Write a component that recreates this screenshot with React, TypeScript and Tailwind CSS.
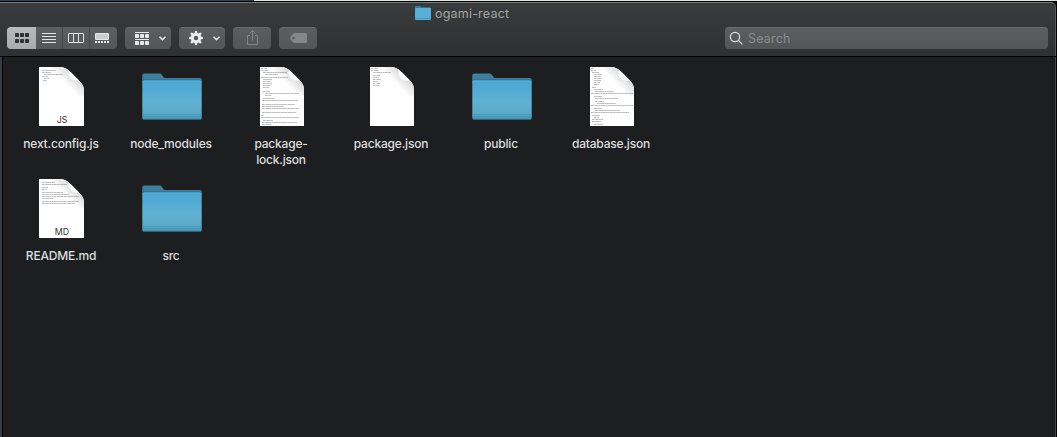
import React from "react";

type Line = [x: number, y: number, width: number];

type Entry = {
  name: string[];
  kind: "folder" | "file";
  badge?: string;
  narrow?: boolean;
  lines?: Line[];
};

const configLines: Line[] = [
  [3, 3.5, 14], [3, 5.5, 9], [5, 7.5, 19], [3, 9.5, 6], [5, 11.5, 5], [4, 13.5, 4],
];

const readmeLines: Line[] = [
  [3, 3.5, 13], [3, 5.5, 25], [3, 8.5, 6], [3, 10.5, 5], [3, 13.5, 21], [3, 15.5, 27],
  [3, 17.5, 37], [3, 19.5, 12], [3, 22.5, 37], [3, 24.5, 33],
];

const packageLines: Line[] = [
  [1, 1.5, 7], [1, 3.5, 8], [3, 5.5, 18], [3, 8.5, 7], [3, 10.5, 6],
  [3, 12.5, 8], [3, 14.5, 5], [3, 16.5, 7], [3, 18.5, 6],
];

const lockLines: Line[] = [
  [1, 1.5, 6], [1, 3.5, 7], [3, 5.5, 24], [5, 7.5, 13], [1, 10.5, 27], [3, 12.5, 9],
  [3, 14.5, 8], [3, 16.5, 9], [3, 18.5, 8], [3, 20.5, 6], [3, 24.5, 7], [5, 26.5, 34],
  [5, 28.5, 6], [3, 31.5, 12], [2, 33.5, 36], [2, 37.5, 33], [2, 39.5, 22], [2, 41.5, 37],
  [2, 45.5, 34], [1, 48.5, 3], [1, 50.5, 38], [3, 53.5, 10], [2, 55.5, 35], [2, 57.5, 10],
];

const databaseLines: Line[] = [
  [1, 1.5, 3], [1, 3.5, 5], [2, 5.5, 7], [4, 7.5, 8], [4, 9.5, 7], [4, 11.5, 8],
  [4, 13.5, 7], [4, 15.5, 6], [4, 17.5, 5], [2, 20.5, 4], [4, 22.5, 9], [5, 24.5, 19],
  [1, 26.5, 42], [4, 29.5, 8], [5, 31.5, 23], [5, 34.5, 9], [7, 36.5, 19], [1, 38.5, 42],
  [4, 41.5, 8], [5, 43.5, 25], [1, 45.5, 38], [2, 48.5, 8], [4, 50.5, 5], [2, 52.5, 11],
  [2, 54.5, 9], [4, 57.5, 9],
];

const entries: Entry[] = [
  { name: ["next.config.js"], kind: "file", badge: "JS", lines: configLines },
  { name: ["node_modules"], kind: "folder" },
  { name: ["package-", "lock.json"], kind: "file", narrow: true, lines: lockLines },
  { name: ["package.json"], kind: "file", narrow: true, lines: packageLines },
  { name: ["public"], kind: "folder" },
  { name: ["database.json"], kind: "file", narrow: true, lines: databaseLines },
  { name: ["README.md"], kind: "file", badge: "MD", lines: readmeLines },
  { name: ["src"], kind: "folder" },
];

function Folder({ id }: { id: string }) {
  return (
    <svg width="60" height="47" viewBox="0 0 60 47" className="mt-1.5 translate-x-px">
      <defs>
        <linearGradient id={id} x1="0" y1="0" x2="0" y2="1">
          <stop offset="0" stopColor="#49a7d6" />
          <stop offset="0.55" stopColor="#5fb1d3" />
          <stop offset="0.85" stopColor="#5aaac8" />
          <stop offset="1" stopColor="#4595b3" />
        </linearGradient>
      </defs>
      <path d="M.3 9V2.2Q.3.5 2 .5h15.5c1.3 0 1.8.5 2.5 1.5l1.6 2.2c.4.5.8.7 1.5.7h35q1.6 0 1.6 1.6V10H.3z" fill="#3f7f9d" />
      <path d="M.3 6.3h59.4V10H.3z" fill="#356f8c" />
      <rect x=".3" y="7.5" width="59.4" height="39" rx="1.5" fill={`url(#${id})`} />
      <path d="M1.2 8h57.6" stroke="#69bee3" strokeWidth=".7" />
      <path d="M.5 41.5h59M.5 43.5h59" stroke="#3e8eac" strokeWidth=".5" />
      <path d="M1 46.1h58" stroke="#347d9a" strokeWidth=".7" />
    </svg>
  );
}

function Page({ id, entry }: { id: string; entry: Entry }) {
  const w = entry.narrow ? 44 : 45;
  const fold = entry.narrow ? 28.5 : 29.5;
  return (
    <svg width={w} height="59" viewBox={`0 0 ${w} 59`} className={entry.narrow ? "translate-x-px" : ""}>
      <defs>
        <linearGradient id={`${id}-shade`} x1="1" y1="0" x2=".4" y2=".5">
          <stop offset="0" stopColor="#b5b5b5" />
          <stop offset=".55" stopColor="#dcdcdc" />
          <stop offset="1" stopColor="#ffffff" />
        </linearGradient>
        <linearGradient id={`${id}-curl`} x1="0" y1="1" x2="1" y2="0">
          <stop offset="0" stopColor="#d8d8d8" />
          <stop offset=".35" stopColor="#ffffff" />
          <stop offset="1" stopColor="#ececec" />
        </linearGradient>
        <clipPath id={`${id}-clip`}>
          <path d={`M0 0h21c5 0 8 2.5 11 5.5l7 7c3.8 4 ${w - 39} 6 ${w - 39} 11.5V59H0z`} />
        </clipPath>
      </defs>
      <g clipPath={`url(#${id}-clip)`}>
        <path d={`M0 0h${w}v59H0z`} fill="#fff" />
        <path d={`M10 0h${w - 10}v29H10z`} fill={`url(#${id}-shade)`} />
        {entry.lines?.map(([x, y, length]) => (
          <path
            key={y}
            d={`M${x} ${y}h${length}`}
            stroke="#6c6c6c"
            strokeWidth="1.2"
            strokeDasharray="2.2 .3 1.2 .3 3 .3"
            opacity=".45"
          />
        ))}
        <path d={`M${fold} 2.5v9.5q0 1.5 1.5 1.5h10z`} fill={`url(#${id}-curl)`} />
      </g>
      {entry.badge && (
        <text x="23" y="56" textAnchor="middle" fill="#333" fontSize="8.8" fontFamily="Inter, sans-serif">
          {entry.badge}
        </text>
      )}
    </svg>
  );
}

function EntryTile({ entry, index }: { entry: Entry; index: number }) {
  return (
    <div className="flex h-28 flex-col items-center">
      <div className="flex h-[69px] items-start justify-center">
        {entry.kind === "folder" ? <Folder id={`folder${index}`} /> : <Page id={`page${index}`} entry={entry} />}
      </div>
      <div className="text-center text-[12px] leading-4 font-medium tracking-[-0.2px] text-[#dededf]">
        {entry.name.map((part) => (
          <div key={part}>{part}</div>
        ))}
      </div>
    </div>
  );
}

const buttonBase = "h-[22px] rounded-[4px] border-t border-[#6a6b6c] bg-linear-to-b from-[#5c5d5e] to-[#545556]";

function ViewSwitcher() {
  return (
    <div className="flex h-[22px] w-[110px] overflow-hidden rounded-[4px] bg-linear-to-b from-[#5e5f60] to-[#545556]">
      <div className="h-full w-[29px] bg-linear-to-b from-[#b8b9ba] to-[#a9aaab]">
        <svg width="29" height="22" fill="#303132">
          <rect x="8" y="6" width="4" height="4" rx=".8" />
          <rect x="13" y="6" width="4" height="4" rx=".8" />
          <rect x="18" y="6" width="4" height="4" rx=".8" />
          <rect x="8" y="12" width="4" height="4" rx=".8" />
          <rect x="13" y="12" width="4" height="4" rx=".8" />
          <rect x="18" y="12" width="4" height="4" rx=".8" />
        </svg>
      </div>
      <div className="h-full w-[27px] border-r border-[#464748]">
        <svg width="26" height="22" stroke="#e4e4e4">
          <path d="M6 6.5h14M6 9.5h14M6 12.5h14M6 15.5h14" />
        </svg>
      </div>
      <div className="h-full w-[27px] border-r border-[#464748]">
        <svg width="26" height="22" fill="none" stroke="#e4e4e4">
          <rect x="5.5" y="6.5" width="15" height="9" rx=".5" />
          <path d="M10.5 6.5v9M15.5 6.5v9" />
        </svg>
      </div>
      <div className="h-full w-[27px]">
        <svg width="27" height="22" fill="#e6e6e6">
          <rect x="5.5" y="6.5" width="13" height="6" rx=".5" fill="#cdcdce" stroke="#e8e8e8" />
          <path d="M5 14h2v2H5zM8 14h2v2H8zM11 14h2v2h-2zM14 14h2v2h-2zM17 14h2v2h-2z" />
        </svg>
      </div>
    </div>
  );
}

function GroupButton() {
  return (
    <div className={`${buttonBase} w-[46px]`}>
      <svg width="46" height="22" className="-mt-px" fill="#e8e8e8">
        <path d="M10 5h14v1H10zM10 12h14v1H10z" />
        <rect x="10" y="7" width="4" height="4" rx=".7" />
        <rect x="15" y="7" width="4" height="4" rx=".7" />
        <rect x="20" y="7" width="4" height="4" rx=".7" />
        <rect x="10" y="14" width="4" height="4" rx=".7" />
        <rect x="15" y="14" width="4" height="4" rx=".7" />
        <rect x="20" y="14" width="4" height="4" rx=".7" />
        <path d="M34.5 9.7l3 2.9 3-2.9" fill="none" stroke="#e8e8e8" strokeWidth="1.5" />
      </svg>
    </div>
  );
}

const teeth = [0, 45, 90, 135, 180, 225, 270, 315];

function ActionButton() {
  return (
    <div className={`${buttonBase} w-[46px]`}>
      <svg width="46" height="22" className="-mt-px">
        <circle cx="17" cy="11" r="3.7" fill="none" stroke="#ececec" strokeWidth="3" />
        {teeth.map((angle) => (
          <path key={angle} d="M15.6 7l.3-3h2.2l.3 3z" fill="#ececec" transform={`rotate(${angle} 17 11)`} />
        ))}
        <path d="M34.5 9.7l3 2.9 3-2.9" fill="none" stroke="#e8e8e8" strokeWidth="1.5" />
      </svg>
    </div>
  );
}

function ShareButton() {
  return (
    <div className={`${buttonBase} w-[38px]`}>
      <svg width="38" height="22" className="-mt-px" fill="none" stroke="#858687">
        <path d="M17 8.5h-2.5v9h10v-9H22M19.5 13.5v-10M16.5 6.5l3-3 3 3" />
      </svg>
    </div>
  );
}

function TagButton() {
  return (
    <div className={`${buttonBase} w-[38px]`}>
      <svg width="38" height="22" className="-mt-px">
        <path
          fill="#858687"
          fillRule="evenodd"
          d="M15.8 6h10.4c1.2 0 1.8.6 1.8 1.8v6.4c0 1.2-.6 1.8-1.8 1.8H15.8c-1 0-1.5-.3-2.1-1l-2.2-2.7q-1.1-1.3 0-2.6L13.7 7c.6-.7 1.1-1 2.1-1zM14.6 9.8a1.2 1.2 0 1 0 0 2.4a1.2 1.2 0 0 0 0-2.4z"
        />
      </svg>
    </div>
  );
}

function TitleFolder() {
  return (
    <svg width="16" height="14" viewBox="0 0 16 14" className="-translate-y-0.5">
      <path d="M0 3V.8Q0 0 .8 0h4.5l1.4 1.3h8.5q.8 0 .8.8V4H0z" fill="#377c9c" />
      <rect y="2" width="16" height="12" rx=".7" fill="#55afd6" />
      <path d="M0 12.5h16" stroke="#489bbd" />
    </svg>
  );
}

export default function App() {
  return (
    <div className="flex h-[437px] w-[1057px] flex-col overflow-hidden bg-black font-['Inter',sans-serif] antialiased">
      <div className="flex h-px shrink-0">
        <div className="w-[254px] bg-[#2a4256]" />
        <div className="flex-1 bg-[#dce6e0]" />
      </div>
      <header className="mt-px flex h-[54px] w-[1056px] shrink-0 flex-col rounded-tr-[5px] border-t border-r border-t-[#777a76] border-r-[#58595a] bg-linear-to-b from-[#3a3b3c] to-[#2f3031]">
        <div className="flex h-6 items-center pl-[415px]">
          <TitleFolder />
          <h1 className="-translate-y-px pl-1 text-[12.5px] leading-4 tracking-[0.2px] text-[#a5a6a7]">ogami-react</h1>
        </div>
        <div className="flex gap-2 pl-[7px]">
          <ViewSwitcher />
          <GroupButton />
          <ActionButton />
          <ShareButton />
          <TagButton />
          <label className={`${buttonBase} ml-[400px] flex w-[323px] items-start`}>
            <svg width="23" height="20" fill="none" stroke="#e1e1e2" strokeWidth="1.2" className="shrink-0">
              <circle cx="10" cy="9" r="4.6" />
              <path d="M13.3 12.3l4 4" />
            </svg>
            <input
              placeholder="Search"
              className="h-5 w-0 flex-1 bg-transparent text-[12.5px] tracking-[0.2px] text-[#dedede] outline-none placeholder:text-[#8b8c8d]"
            />
          </label>
        </div>
      </header>
      <div className="mt-px flex min-h-0 flex-1">
        <div className="w-0.5 bg-[#353e46]" />
        <main className="ml-px w-[1053px] border-r border-[#444546] bg-[#1d1e20] pt-[10px] pl-[3px]">
          <div className="grid grid-cols-[repeat(6,110px)]">
            {entries.map((entry, index) => (
              <EntryTile key={entry.name[0]} entry={entry} index={index} />
            ))}
          </div>
        </main>
      </div>
    </div>
  );
}
